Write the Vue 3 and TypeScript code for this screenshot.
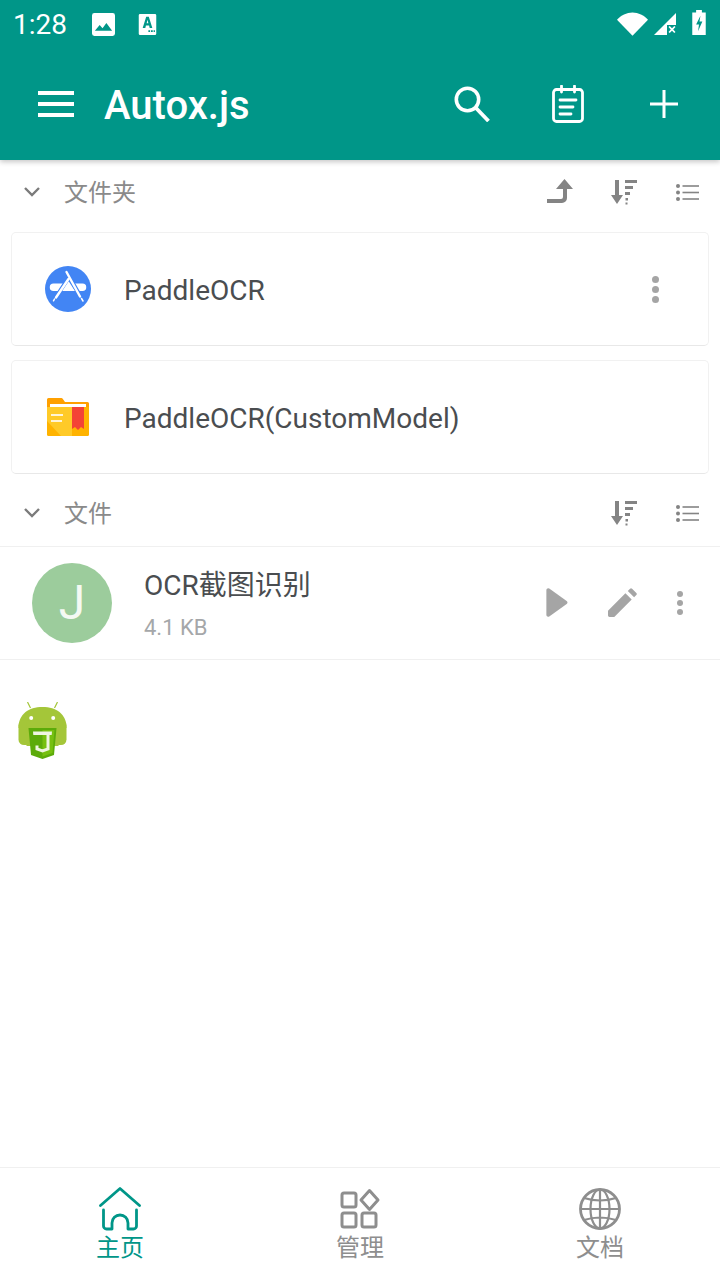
<script setup lang="ts">
const tabs = [
  { label: '主页', active: true, key: 'home' },
  { label: '管理', active: false, key: 'apps' },
  { label: '文档', active: false, key: 'globe' },
]
</script>

<template>
  <div class="page">
    <header class="appbar">
      <div class="status">
        <span class="time">1:28</span>
        <svg class="st-img" viewBox="0 0 24 24"><path fill="#fff" d="M2.500 0h19A2.500 2.500 0 0 1 24 2.500v19a2.500 2.500 0 0 1-2.500 2.500h-19A2.500 2.500 0 0 1 0 21.500v-19A2.500 2.500 0 0 1 2.500 0z"/><path fill="#009688" d="M3 18.500l5-6 3 3.500 4-5.500 6 8z"/></svg>
        <svg class="st-a" viewBox="0 0 20 24"><path fill="#fff" d="M1.500 0h17A1.500 1.500 0 0 1 20 1.500v21a1.500 1.500 0 0 1-1.500 1.500h-17A1.500 1.500 0 0 1 0 22.500v-21A1.500 1.500 0 0 1 1.500 0z"/><path fill="#009688" d="M8.500 3h3l4 13h-3l-.7-3H8.200l-.7 3h-3zM9 10.500h2L10 6.500zM11 18.500h2v2h-2zM14 18.500h2v2h-2zM17 18.500h1.500v2H17z"/></svg>
        <span class="grow"></span>
        <svg class="st-wifi" viewBox="0 0 32 24"><path fill="#fff" d="M0 7.500C4 3 10 0 16 0s12 3 16 7.500L16 24z"/></svg>
        <svg class="st-sig" viewBox="0 0 22 22"><path fill="#fff" d="M22 0v12h-9v10H0z"/><path fill="#fff" d="M14.500 14l1.200-1 2.300 2.300 2.300-2.300 1.200 1-2.300 2.500 2.300 2.500-1.200 1-2.300-2.300-2.300 2.300-1.200-1 2.300-2.500z"/></svg>
        <svg class="st-bat" viewBox="0 0 14 26"><path fill="#fff" d="M4 0h6v2.500h4V26H0V2.500h4z"/><path fill="#009688" d="M8.500 6L4 15h3l-1 7 4.500-10H7.500z"/></svg>
      </div>
      <div class="toolbar">
        <button class="menu" aria-label="menu"><span></span><span></span><span></span></button>
        <span class="title">Autox.js</span>
        <span class="grow"></span>
        <svg class="tb-search" viewBox="0 0 36 36" fill="none" stroke="#fff"><circle cx="13.500" cy="13.500" r="11.200" stroke-width="3.600"/><path d="M21.500 21.500L34.500 35" stroke-width="3.800"/></svg>
        <svg class="tb-note" viewBox="0 0 32 38" fill="none" stroke="#fff" stroke-width="2.800" stroke-linecap="round"><rect x="1.500" y="4.500" width="29" height="32" rx="3"/><path d="M9.500 1v6M22.500 1v6M8 15h16M8 22h13M8 29h11"/></svg>
        <svg class="tb-plus" viewBox="0 0 28 28"><path fill="#fff" d="M12.500 0h3v12.500H28v3H15.500V28h-3V15.500H0v-3h12.500z"/></svg>
      </div>
    </header>

    <section class="sec-head first">
      <svg class="chev" viewBox="0 0 16 10" fill="none" stroke="#7b7b7b" stroke-width="2.400"><path d="M1 1l7 7 7-7"/></svg>
      <span class="sec-label">文件夹</span>
      <span class="grow"></span>
      <svg class="hi up" viewBox="0 0 26 26"><path fill="#848484" d="M17.500 0L26 10h-6v9a5 5 0 0 1-5 5H0v-4h14a2 2 0 0 0 2-2v-8H9z"/></svg>
      <svg class="hi sort" viewBox="0 0 26 26"><path fill="#848484" d="M4 1h4v15h4l-6 9-6-9h4zM14 1h12v3H14zM14 7h8v3h-8zM14 13h5v3h-5zM14.500 19h2.500v2.500h-2.500zM14.500 23.500h2v2h-2z"/></svg>
      <svg class="hi list" viewBox="0 0 23 17"><g fill="#848484"><circle cx="2" cy="2" r="2"/><circle cx="2" cy="8.500" r="2"/><circle cx="2" cy="15" r="2"/><rect x="6.500" y="1.200" width="16.500" height="1.600"/><rect x="6.500" y="7.700" width="16.500" height="1.600"/><rect x="6.500" y="14.200" width="16.500" height="1.600"/></g></svg>
    </section>

    <div class="cards">
      <div class="card">
        <svg class="c-icon" viewBox="0 0 46 46">
          <circle cx="23" cy="23" r="23" fill="#4285f4"/>
          <g fill="#fff">
            <path d="M8.500 17.500H18L13.500 25H8.500a3.750 3.750 0 0 1 0-7.500zM29 17.500h8.500a3.750 3.750 0 0 1 0 7.500H33z"/>
            <path d="M23.500 15L30 25H16.500z"/>
          </g>
          <g fill="none" stroke="#4285f4" stroke-width="4">
            <path d="M23.500 12L9 34"/>
            <path d="M21.500 6l16 28"/>
          </g>
          <g fill="none" stroke="#fff" stroke-linecap="round">
            <path d="M23.500 13L11 31.500" stroke-width="2.400"/>
            <path d="M21.500 6L35 30.500" stroke-width="2.400"/>
            <path d="M36.500 32.500l1.500 2.500M9.500 33l-1 1.800" stroke-width="1.500"/>
          </g>
        </svg>
        <span class="c-name">PaddleOCR</span>
        <span class="grow"></span>
        <span class="dots d-card"><i></i><i></i><i></i></span>
      </div>
      <div class="card">
        <svg class="c-icon folder" viewBox="0 0 42 38">
          <path fill="#ffa000" d="M1.500 0h13a1.500 1.500 0 0 1 1 .5L18 4h22.500A1.500 1.500 0 0 1 42 5.500V12H0V1.500A1.500 1.500 0 0 1 1.500 0z"/>
          <rect x="3" y="6" width="36" height="8" fill="#fff"/>
          <path fill="#ffb300" d="M0 9h42v27.500a1.500 1.500 0 0 1-1.500 1.500h-39A1.500 1.500 0 0 1 0 36.500z"/>
          <path fill="#ffca28" d="M0 9h25v29H14L0 23z"/>
          <rect x="3" y="6" width="36" height="3" fill="#fff"/>
          <path fill="#f44336" d="M25 9h12v22l-3-2-3 3-3-3-3 2z"/>
          <path fill="#fff4d6" d="M4 16h12v2H4zM4 22h11v2H4z"/>
        </svg>
        <span class="c-name">PaddleOCR(CustomModel)</span>
      </div>
    </div>

    <section class="sec-head second">
      <svg class="chev" viewBox="0 0 16 10" fill="none" stroke="#7b7b7b" stroke-width="2.400"><path d="M1 1l7 7 7-7"/></svg>
      <span class="sec-label">文件</span>
      <span class="grow"></span>
      <svg class="hi sort" viewBox="0 0 26 26"><path fill="#848484" d="M4 1h4v15h4l-6 9-6-9h4zM14 1h12v3H14zM14 7h8v3h-8zM14 13h5v3h-5zM14.500 19h2.500v2.500h-2.500zM14.500 23.500h2v2h-2z"/></svg>
      <svg class="hi list" viewBox="0 0 23 17"><g fill="#848484"><circle cx="2" cy="2" r="2"/><circle cx="2" cy="8.500" r="2"/><circle cx="2" cy="15" r="2"/><rect x="6.500" y="1.200" width="16.500" height="1.600"/><rect x="6.500" y="7.700" width="16.500" height="1.600"/><rect x="6.500" y="14.200" width="16.500" height="1.600"/></g></svg>
    </section>

    <div class="file-row">
      <div class="avatar">J</div>
      <div class="file-text">
        <span class="f-name">OCR截图识别</span>
        <span class="f-size">4.1 KB</span>
      </div>
      <span class="grow"></span>
      <svg class="play" viewBox="0 0 22 30"><path fill="#a5a5a5" d="M0 2a2 2 0 0 1 3-1.500l18 13a2 2 0 0 1 0 3L3 29.500A2 2 0 0 1 0 28z"/></svg>
      <svg class="pen" viewBox="0 0 30 30"><path fill="#a5a5a5" d="M0 23.500L18 5.500l6.500 6.500L6.500 30H1.500A1.500 1.500 0 0 1 0 28.500zM20.500 3l2.300-2.300a1.500 1.500 0 0 1 2.100 0l4.400 4.400a1.500 1.500 0 0 1 0 2.100L27 9.500z"/></svg>
      <span class="dots d-file"><i></i><i></i><i></i></span>
    </div>

    <div class="logo-wrap">
      <svg class="droid" viewBox="0 0 48 58">
        <path d="M12 6L9 0M36 6l3-6" stroke="#a4c639" stroke-width="1.200" fill="none"/>
        <path fill="#a4c639" d="M0 26C0 12 10 5 24 5s24 7 24 21z"/>
        <rect x="0" y="18" width="13" height="25" rx="5.500" fill="#a4c639"/>
        <rect x="35" y="18" width="13" height="25" rx="5.500" fill="#a4c639"/>
        <rect x="8" y="20" width="32" height="24" fill="#a4c639"/>
        <circle cx="12.700" cy="16" r="2" fill="#fff"/>
        <circle cx="34.700" cy="16" r="2" fill="#fff"/>
        <path fill="#5cab0a" d="M10 26h28l-2.500 27L24 57l-11.500-4z"/>
        <path fill="#76c010" d="M24 28h12l-2 23-10 3.500z"/>
        <path fill="#eef5e0" d="M14.500 29.500h19l-.3 3.500h-18.400z"/>
        <path fill="none" stroke="#eef5e0" stroke-width="3" d="M29.500 33v14L24 49l-5.500-2v-3.500"/>
      </svg>
    </div>

    <span class="fill"></span>

    <nav class="tabs">
      <div v-for="t in tabs" :key="t.key" class="tab" :class="{ active: t.active }">
        <svg v-if="t.key === 'home'" class="t-icon home" viewBox="0 0 42 44" fill="none" stroke="#009688" stroke-width="2.800" stroke-linecap="round" stroke-linejoin="round"><path d="M1.500 18.500L21 1.500l19.500 17"/><path d="M4.500 23v16a3 3 0 0 0 3 3h5.500v-6a8 8 0 0 1 16 0v6h5.500a3 3 0 0 0 3-3V23"/></svg>
        <svg v-else-if="t.key === 'apps'" class="t-icon" viewBox="0 0 42 42" fill="none" stroke="#8e8e8e" stroke-width="3" stroke-linejoin="round"><rect x="3" y="5" width="14" height="14" rx="2"/><rect x="3" y="25" width="14" height="14" rx="2"/><rect x="23" y="25" width="14" height="14" rx="2"/><path d="M30.500 2.500L39 12l-8.500 9.500L22 12z"/></svg>
        <svg v-else class="t-icon" viewBox="0 0 42 42" fill="none" stroke="#8e8e8e" stroke-width="2.200"><circle cx="21" cy="21" r="19.500" stroke-width="2.800"/><ellipse cx="21" cy="21" rx="9.500" ry="19.500"/><path d="M21 1.500v39M5 10q16 5 32 0M1.500 21h39M5 32q16-5 32 0"/></svg>
        <span class="t-label">{{ t.label }}</span>
      </div>
    </nav>
  </div>
</template>

<style>
html, body { margin: 0; background: #fff; }
</style>

<style scoped>
.page {
  width: 720px;
  height: 1280px;
  display: flex;
  flex-direction: column;
  background: #fff;
  overflow: hidden;
  font-family: Roboto, "Noto Sans CJK SC", sans-serif;
}
.grow { flex: 1; }
.appbar {
  height: 160px;
  flex: none;
  background: #009688;
  box-shadow: 0 2px 5px rgba(0, 0, 0, .22);
  position: relative;
  z-index: 1;
}
.status {
  height: 48px;
  display: flex;
  align-items: center;
  padding: 0 14px 0 13px;
  color: #fff;
  box-sizing: border-box;
}
.time { font-size: 28px; line-height: 48px; width: 53px; margin-top: 2px; }
.st-img { width: 23px; height: 23px; margin-left: 26px; }
.st-a { width: 19px; height: 21px; margin-left: 23px; }
.st-wifi { width: 31px; height: 24px; margin-right: 6px; }
.st-sig { width: 22px; height: 22px; margin-right: 16px; }
.st-bat { width: 14px; height: 25px; margin-top: -3px; }
.toolbar {
  height: 112px;
  box-sizing: border-box;
  display: flex;
  align-items: center;
}
.menu {
  width: 36px;
  height: 26px;
  margin-left: 38px;
  padding: 0;
  border: 0;
  background: none;
  display: flex;
  flex-direction: column;
  justify-content: space-between;
}
.menu span { display: block; height: 4px; background: #fff; width: 36px; }
.title {
  margin-left: 30px;
  padding-top: 3px;
  color: #fff;
  font-size: 40px;
  font-weight: 500;
}
.tb-search { width: 36px; height: 36px; margin-right: 62px; }
.tb-note { width: 32px; height: 38px; margin-right: 66px; }
.tb-plus { width: 28px; height: 28px; margin-right: 42px; }

.sec-head { display: flex; align-items: center; flex: none; box-sizing: border-box; }
.sec-head.first { height: 64px; }
.sec-head.second { height: 73px; border-bottom: 1px solid #f0f0f0; padding-top: 6px; }
.chev { width: 16px; height: 10px; margin-left: 24px; }
.sec-label { margin-left: 24px; margin-bottom: 4px; font-size: 24px; color: #8a8a8a; }
.hi.up { width: 26px; height: 26px; margin-right: 38px; }
.hi.sort { width: 26px; height: 26px; margin-right: 39px; }
.hi.list { width: 23px; height: 17px; margin-right: 21px; }

.cards { display: flex; flex-direction: column; gap: 14px; margin: 8px 11px 0; }
.card {
  height: 114px;
  box-sizing: border-box;
  border: 1px solid #f1f1f1;
  border-bottom-color: #e8e8e8;
  border-radius: 5px;
  display: flex;
  align-items: center;
  padding-left: 33px;
  background: #fff;
}
.c-icon { width: 46px; height: 46px; flex: none; }
.c-icon.folder { width: 42px; height: 38px; margin-left: 2px; margin-right: 2px; }
.c-name { margin-left: 33px; padding-top: 2px; font-size: 28px; color: #4a4d50; }
.dots { display: flex; flex-direction: column; gap: 3px; }
.dots i { display: block; width: 6px; height: 6px; border-radius: 50%; background: #a5a5a5; }
.d-card { margin-right: 49px; }
.d-card i { width: 7px; height: 7px; }
.d-file { margin-right: 37px; }

.file-row {
  height: 113px;
  flex: none;
  box-sizing: border-box;
  border-bottom: 1px solid #f0f0f0;
  display: flex;
  align-items: center;
  padding-bottom: 1px;
}
.avatar {
  width: 80px;
  height: 80px;
  margin-left: 32px;
  border-radius: 50%;
  background: #9ccc9c;
  color: #f4f9f3;
  font-size: 48px;
  font-weight: 400;
  display: flex;
  align-items: center;
  justify-content: center;
}
.file-text { display: flex; flex-direction: column; margin-left: 32px; margin-top: 4px; gap: 9px; }
.f-name { font-size: 28px; line-height: 38px; color: #4a4d50; }
.f-size { font-size: 22px; line-height: 28px; color: #a5a7a9; }
.play { width: 22px; height: 29px; margin-right: 40px; }
.pen { width: 29px; height: 29px; margin-right: 40px; }

.logo-wrap { padding: 42px 0 0 18px; flex: none; }
.droid { display: block; width: 49px; height: 58px; }
.fill { flex: 1; }

.tabs {
  height: 113px;
  flex: none;
  box-sizing: border-box;
  border-top: 1px solid #f0f0f0;
  display: flex;
}
.tab {
  flex: 1;
  display: flex;
  flex-direction: column;
  align-items: center;
  padding-top: 20px;
  color: #8e8e8e;
}
.tab.active { color: #009688; }
.t-icon { width: 42px; height: 42px; }
.t-icon.home { height: 44px; margin: -1px 0 -1px; }
.t-label { font-size: 24px; line-height: 34px; margin-top: 1px; }
</style>
